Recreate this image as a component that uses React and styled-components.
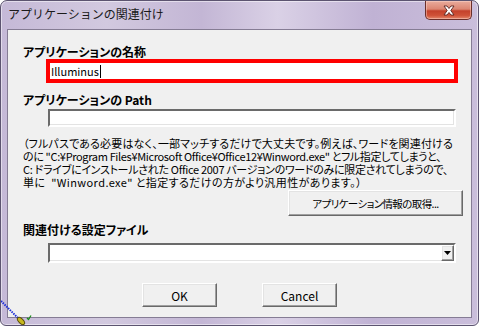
import React, { useLayoutEffect, useRef, useState } from "react";
import styled, { createGlobalStyle } from "styled-components";

const GlobalStyle = createGlobalStyle`
  html, body { margin: 0; padding: 0; background: #ffffff; }
  body { font-family: "Noto Sans CJK JP", "Liberation Sans", sans-serif; color: #000; }
  * { box-sizing: border-box; }
`;

const Window = styled.div`
  position: relative;
  width: 479px;
  height: 326px;
  border: 1px solid #5c5470;
  border-radius: 7px 7px 6px 6px;
  background: linear-gradient(90deg, #c5b9d7 0%, #d2c9df 22%, #c3b6d5 42%, #dad1e6 58%, #c0b2d4 78%, #cabedb 100%);
  box-shadow: inset 0 0 0 1px rgba(255, 255, 255, 0.5);
  padding: 0 6px 7px 6px;
  display: flex;
  flex-direction: column;
  overflow: hidden;
`;

const TitleBar = styled.div`
  height: 28px;
  display: flex;
  align-items: flex-start;
  justify-content: space-between;
  padding-left: 1px;
`;

const TitleText = styled.div`
  font-size: 12px;
  line-height: 14px;
  padding-top: 6px;
  color: #1a1a1a;
  white-space: nowrap;
`;

const CloseButton = styled.div`
  width: 47px;
  height: 19px;
  border: 1px solid #6a2f2a;
  border-top: none;
  border-radius: 0 0 5px 5px;
  background: linear-gradient(180deg, #e9ab9c 0%, #dc8672 45%, #c4412b 55%, #cf5238 80%, #e3876c 100%);
  box-shadow: inset 0 0 0 1px rgba(255, 220, 210, 0.45);
  display: flex;
  align-items: center;
  justify-content: center;
`;

const Client = styled.div`
  flex: 1;
  border: 1px solid #857c94;
  background: #f0f0f0;
  padding: 15px 0 0 15px;
  display: flex;
  flex-direction: column;
`;

const FieldLabel = styled.div`
  font-size: 12px;
  font-weight: 700;
  line-height: 14px;
  height: 14px;
  margin-top: ${(p) => p.$top || 0}px;
  font-feature-settings: "palt";
  white-space: nowrap;
`;

const TextBox = styled.div`
  margin-top: ${(p) => p.$top || 0}px;
  margin-left: ${(p) => p.$left}px;
  width: ${(p) => p.$width}px;
  height: ${(p) => p.$height}px;
  background: #ffffff;
  display: flex;
  align-items: center;
  padding-left: 1px;
  font-size: 11px;
  ${(p) =>
    p.$highlight
      ? `border: 4px solid #ff0000;`
      : `border-style: solid;
         border-width: 2px;
         border-color: #6a6a6a #ffffff #ffffff #6a6a6a;
         box-shadow: inset -1px -1px 0 #e3e3e3;`}
`;

const Caret = styled.span`
  display: inline-block;
  width: 1px;
  height: 13px;
  background: #000;
  margin-left: 1px;
`;

const HelpText = styled.div`
  margin-top: 10px;
  font-size: 11px;
  line-height: 13px;
  font-feature-settings: "palt";
  white-space: nowrap;
`;

const HelpLine = styled.div`
  width: max-content;
  height: 13px;
`;

const ActionRow = styled.div`
  display: flex;
  justify-content: flex-end;
  padding-right: 8px;
  margin-top: ${(p) => p.$top || 0}px;
`;

const Button3D = styled.div`
  width: ${(p) => p.$width}px;
  height: ${(p) => p.$height}px;
  background: #f0f0f0;
  border-style: solid;
  border-width: 1px;
  border-color: #ffffff #696969 #696969 #ffffff;
  box-shadow: inset -1px -1px 0 #a0a0a0, inset 1px 1px 0 #e3e3e3;
  display: flex;
  align-items: center;
  justify-content: center;
  font-size: ${(p) => p.$font || 12}px;
  letter-spacing: ${(p) => p.$spacing || 0}px;
  font-feature-settings: "palt";
  white-space: nowrap;
`;

const Combo = styled(TextBox)`
  justify-content: flex-end;
  align-items: stretch;
  padding: 0;
`;

const ComboArrow = styled(Button3D)`
  width: 13px;
  height: auto;
`;

const Footer = styled.div`
  margin-top: 20px;
  margin-left: -15px;
  display: flex;
  justify-content: center;
  gap: 45px;
`;

const CursorArt = styled.svg`
  position: absolute;
  left: 0;
  top: 296px;
`;

function FitLine({ width, children }) {
  const ref = useRef(null);
  const [spacing, setSpacing] = useState(null);
  useLayoutEffect(() => {
    const el = ref.current;
    if (!el) return;
    const natural = el.getBoundingClientRect().width;
    const count = Math.max(1, el.textContent.length);
    setSpacing((width - natural) / count);
  }, [width]);
  return (
    <HelpLine ref={ref} style={spacing === null ? undefined : { letterSpacing: `${spacing}px` }}>
      {children}
    </HelpLine>
  );
}

export default function App() {
  return (
    <>
      <GlobalStyle />
      <Window>
        <TitleBar>
          <TitleText>アプリケーションの関連付け</TitleText>
          <CloseButton>
            <svg width="14" height="11" viewBox="0 0 14 11">
              <path
                d="M2 1 L5 1 L7 3.5 L9 1 L12 1 L8.8 5.5 L12 10 L9 10 L7 7.5 L5 10 L2 10 L5.2 5.5 Z"
                fill="#ffffff"
                stroke="#5a2420"
                strokeWidth="0.9"
                strokeLinejoin="round"
              />
            </svg>
          </CloseButton>
        </TitleBar>
        <Client>
          <FieldLabel>アプリケーションの名称</FieldLabel>
          <TextBox $highlight $left={23} $width={412} $height={24}>
            Illuminus
            <Caret />
          </TextBox>
          <FieldLabel $top={10}>アプリケーションの Path</FieldLabel>
          <TextBox $top={2} $left={25} $width={408} $height={18} />
          <HelpText>
            <FitLine width={430}>
              （フルパスである必要はなく、一部マッチするだけで大丈夫です。例えば、ワードを関連付ける
            </FitLine>
            <FitLine width={418}>
              のに "C:¥Program Files¥Microsoft Office¥Office12¥Winword.exe" とフル指定してしまうと、
            </FitLine>
            <FitLine width={425}>
              C: ドライブにインストールされた Office 2007 バージョンのワードのみに限定されてしまうので、
            </FitLine>
            <FitLine width={339}>
              単に&nbsp; "Winword.exe" と指定するだけの方がより汎用性があります。）
            </FitLine>
          </HelpText>
          <ActionRow $top={1}>
            <Button3D $width={175} $height={26} $font={10.5} $spacing={-0.6}>
              アプリケーション情報の取得...
            </Button3D>
          </ActionRow>
          <FieldLabel $top={7}>関連付ける設定ファイル</FieldLabel>
          <Combo $top={6} $left={25} $width={408} $height={20}>
            <ComboArrow>
              <svg width="7" height="4" viewBox="0 0 7 4">
                <path d="M0 0 L7 0 L3.5 4 Z" fill="#000" />
              </svg>
            </ComboArrow>
          </Combo>
          <Footer>
            <Button3D $width={75} $height={24}>OK</Button3D>
            <Button3D $width={75} $height={24}>Cancel</Button3D>
          </Footer>
        </Client>
        <CursorArt width="34" height="30" viewBox="0 0 34 30">
          <line x1="0" y1="4" x2="17" y2="21" stroke="#1e2fd8" strokeWidth="2" strokeDasharray="1.5 1" />
          <ellipse cx="20" cy="24" rx="4.5" ry="2.3" transform="rotate(45 20 24)" fill="#c8b820" stroke="#5a4e08" strokeWidth="1" />
          <path d="M26 21 L27.5 22.5 L30 18.5" fill="none" stroke="#1a8a1a" strokeWidth="1.3" />
        </CursorArt>
      </Window>
    </>
  );
}
